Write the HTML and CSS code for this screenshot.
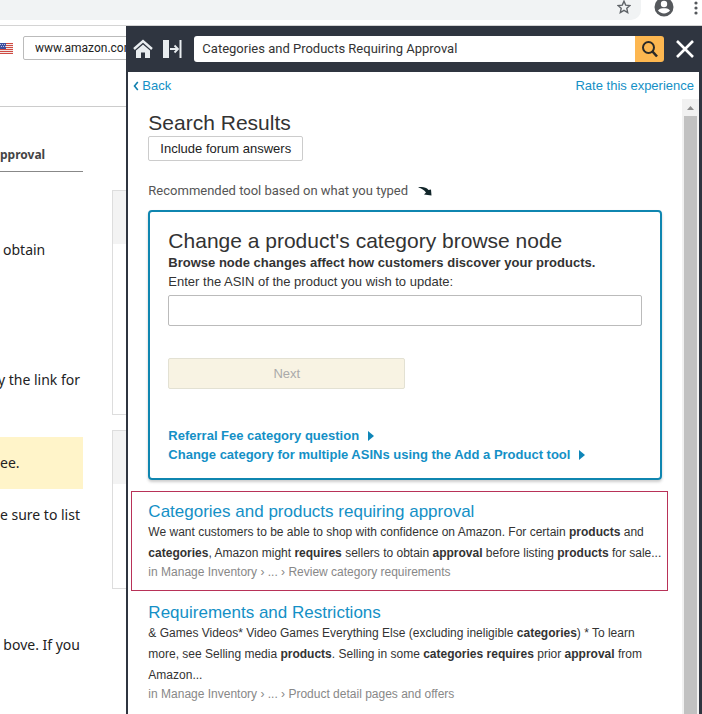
FILE: index.html
```html
<!DOCTYPE html>
<html lang="en">
<head>
<meta charset="utf-8">
<title>Search Results</title>
<link rel="stylesheet" href="styles.css">
</head>
<body>
<header class="browser-bar">
  <div class="address-bar">
    <button class="bar-button" aria-label="Bookmark this page">
      <svg width="14" height="14" viewBox="0 0 14 14"><path d="M7 1.2 8.7 5.1 13 5.5 9.8 8.3 10.7 12.6 7 10.4 3.3 12.6 4.2 8.3 1 5.5 5.3 5.1Z" fill="none" stroke="#5f6368" stroke-width="1.4"/></svg>
    </button>
  </div>
  <button class="bar-button" aria-label="Profile">
    <svg width="20" height="20" viewBox="0 0 20 20"><circle cx="10" cy="10" r="9.5" fill="#55585c"/><circle cx="10" cy="7" r="3.2" fill="#fff"/><path d="M4 13.6C5.500 11.400 8 11.200 10 11.200s4.500.2 6 2.400C14.600 15.500 12.400 16.400 10 16.400S5.400 15.500 4 13.600Z" fill="#fff"/></svg>
  </button>
  <button class="bar-button" aria-label="More">
    <svg width="4" height="16" viewBox="0 0 4 16" fill="#55585c"><circle cx="2" cy="3" r="1.600"/><circle cx="2" cy="8" r="1.600"/><circle cx="2" cy="13" r="1.600"/></svg>
  </button>
</header>
<div class="workspace">
  <main class="page">
    <div class="page-header">
      <svg class="flag" width="13" height="11" viewBox="0 0 13 11"><path fill="#f4e9e6" d="M0 0h13v11H0z"/><path stroke="#cf4a43" d="M0 .5h13M0 2.500h13M0 4.500h13M0 6.500h13M0 8.500h13M0 10.500h13"/><path fill="#3d4f9f" d="M0 0h6v6H0z"/><path stroke="#b9c0e0" stroke-dasharray="1 1" d="M0 1.500h6M1 3.500h5"/></svg>
      <select class="market" aria-label="Marketplace"><option>www.amazon.com</option></select>
    </div>
    <div class="page-body">
      <div class="article">
        <h2 class="article-tab">pproval</h2>
        <p class="line line-start">obtain</p>
        <p class="line">y the link for</p>
        <p class="note">ee.</p>
        <p class="line line-after-note">e sure to list</p>
        <p class="line">bove. If you</p>
      </div>
      <aside class="cards">
        <div class="card card-tall"></div>
        <div class="card"></div>
      </aside>
    </div>
  </main>
  <section class="panel" aria-label="Help">
    <form class="panel-header">
      <button class="tool" type="button" aria-label="Home">
        <svg width="20" height="20" viewBox="0 0 20 20"><path d="M1 10 10 2l9 8" fill="none" stroke="#e9edf0" stroke-width="2.400"/><path d="m10 5.500 7 6V19h-5v-5.500H8V19H3v-7.500Z" fill="#e9edf0"/></svg>
      </button>
      <button class="tool" type="button" aria-label="Undock panel">
        <svg width="19" height="18" viewBox="0 0 19 18"><path d="M0 0h6v18H0zM16.500 0H18.500v18H16.500z" fill="#e9edf0"/><path d="M7 9h8M11.500 5.500 15 9l-3.500 3.500" fill="none" stroke="#e9edf0" stroke-width="1.800"/></svg>
      </button>
      <div class="search">
        <input class="search-input" type="text" aria-label="Search help" value="Categories and Products Requiring Approval">
        <button class="search-button" type="button" aria-label="Search">
          <svg width="18" height="18" viewBox="0 0 18 18" fill="none" stroke="#2b2a28"><circle cx="7.500" cy="7.500" r="5.500" stroke-width="2"/><path d="m11.500 11.500 4.500 5" stroke-width="2.600"/></svg>
        </button>
      </div>
      <button class="tool close" type="button" aria-label="Close">
        <svg width="20" height="20" viewBox="0 0 20 20"><path d="m2 2 16 16M18 2 2 18" stroke="#fff" stroke-width="2.600"/></svg>
      </button>
    </form>
    <nav class="panel-nav">
      <a class="nav-link" href="#"><svg width="6" height="10" viewBox="0 0 6 10"><path d="M4.800 1 1.500 5l3.300 4" fill="none" stroke="#0f7fae" stroke-width="1.600"/></svg>Back</a>
      <a class="nav-link" href="#">Rate this experience</a>
    </nav>
    <div class="panel-body">
      <div class="content">
        <h1 class="title">Search Results</h1>
        <button class="forum" type="button">Include forum answers</button>
        <p class="recommended">Recommended tool based on what you typed
          <svg width="14" height="10" viewBox="0 0 14 10"><path d="M0 1.500C4 .5 8 1 10.500 4L13 3.500 13.500 9.500 6 8.500 8 6.500C6 4 4 2.500 0 1.500Z" fill="#12262a"/></svg>
        </p>
        <form class="asin">
          <h2 class="asin-title">Change a product's category browse node</h2>
          <p class="asin-text"><b>Browse node changes affect how customers discover your products.</b></p>
          <label class="asin-text" for="asin">Enter the ASIN of the product you wish to update:</label>
          <input class="asin-input" id="asin" type="text">
          <button class="next" type="button" disabled>Next</button>
          <a class="asin-link" href="#">Referral Fee category question<svg width="6" height="10" viewBox="0 0 6 10"><path d="m0 0 6 5-6 5Z" fill="#0f86b8"/></svg></a>
          <a class="asin-link" href="#">Change category for multiple ASINs using the Add a Product tool<svg width="6" height="10" viewBox="0 0 6 10"><path d="m0 0 6 5-6 5Z" fill="#0f86b8"/></svg></a>
        </form>
        <div class="results">
          <article class="result highlighted">
            <h3 class="result-title"><a href="#">Categories and products requiring approval</a></h3>
            <p class="result-text">We want customers to be able to shop with confidence on Amazon. For certain <b>products</b> and <b>categories</b>, Amazon might <b>requires</b> sellers to obtain <b>approval</b> before listing <b>products</b> for sale...</p>
            <p class="crumbs">in Manage Inventory › ... › Review category requirements</p>
          </article>
          <article class="result">
            <h3 class="result-title"><a href="#">Requirements and Restrictions</a></h3>
            <p class="result-text">&amp; Games Videos* Video Games Everything Else (excluding ineligible <b>categories</b>) * To learn more, see Selling media <b>products</b>. Selling in some <b>categories requires</b> prior <b>approval</b> from Amazon...</p>
            <p class="crumbs">in Manage Inventory › ... › Product detail pages and offers</p>
          </article>
        </div>
      </div>
      <div class="scrollbar" aria-hidden="true">
        <svg class="scroll-arrow" width="7" height="4" viewBox="0 0 7 4"><path d="M0 4 3.500 0 7 4Z" fill="#8c8c8c"/></svg>
        <div class="thumb"></div>
      </div>
    </div>
  </section>
</div>
</body>
</html>
```

FILE: styles.css
```css
* { box-sizing: border-box; }

body {
  margin: 0;
  min-height: 100vh;
  display: flex;
  flex-direction: column;
  background: #fff;
  color: #333;
  font: 13px/19px "Liberation Sans", Arial, sans-serif;
}

h1, h2, h3, p { margin: 0; font-weight: normal; }
a { color: #1490c6; text-decoration: none; }
button { padding: 0; border: 0; background: none; font: inherit; }
input, select { font: inherit; color: inherit; }
svg { display: block; flex: none; }

/* Browser chrome */
.browser-bar {
  display: flex;
  align-items: flex-start;
  gap: 20px;
  height: 26px;
  padding-right: 4px;
  border-bottom: 1px solid #d4d4d4;
}
.address-bar {
  flex: 1;
  display: flex;
  justify-content: flex-end;
  height: 20px;
  padding-right: 10px;
  margin-right: -7px;
  border-radius: 0 0 10px 0;
  background: #f1f3f4;
}
.address-bar .bar-button { height: 14px; }
.browser-bar > .bar-button { margin-top: -3px; }
.browser-bar > .bar-button:last-child { margin-top: 0; }

.workspace {
  flex: 1;
  display: grid;
  grid-template-columns: 18% 1fr;
}

/* Underlying page */
.page {
  overflow: hidden;
  color: #222;
  font: 14px/20px "Noto Sans", "Open Sans", sans-serif;
}
.page-header {
  display: flex;
  gap: 10px;
  height: 81px;
  padding-top: 10px;
  border-bottom: 1px solid #ccc;
}
.flag { margin-top: 7px; }
.market {
  appearance: none;
  flex: none;
  width: 130px;
  height: 24px;
  padding: 0 11px;
  border: 1px solid #bbb;
  border-radius: 2px;
  background: #fff;
  font: 12px/20px Roboto, sans-serif;
}
.page-body { display: flex; justify-content: space-between; }
.article { width: 83px; padding-top: 38px; }
.article-tab {
  padding-bottom: 6px;
  border-bottom: 1px solid #888;
  font-size: 12px;
  font-weight: bold;
  color: #444;
}
.line {
  display: flex;
  justify-content: flex-end;
  margin-top: 110px;
  padding-right: 3px;
  white-space: nowrap;
}
.line-start {
  justify-content: flex-start;
  margin-top: 68px;
  padding-left: 3px;
}
.note {
  margin-top: 47px;
  padding: 16px 0;
  background: #fff4c9;
}
.line-after-note { margin-top: 16px; }
.cards {
  display: grid;
  gap: 15px;
  align-content: start;
  width: 14px;
  padding-top: 83px;
}
.card {
  height: 159px;
  border: 1px solid #ddd;
  border-right: 0;
  background: linear-gradient(#f3f3f3 53px, #fff 53px);
}
.card-tall { height: 225px; }

/* Help panel */
.panel {
  display: flex;
  flex-direction: column;
  border: solid #2f3540;
  border-width: 0 3px 0 2px;
}
.panel-header {
  display: flex;
  align-items: center;
  height: 46px;
  padding: 0 4px 0 5px;
  gap: 10px;
  background: #2f3540;
}
.search {
  flex: 1;
  display: flex;
  height: 26px;
  margin: 0 1px 0 2px;
  border-radius: 3px;
  overflow: hidden;
}
.search-input {
  flex: 1;
  min-width: 0;
  padding: 0 8px;
  border: 0;
  font: 13px/20px Roboto, sans-serif;
}
.search-button {
  display: grid;
  place-items: center;
  width: 29px;
  background: #fdb750;
}
.panel-nav {
  display: flex;
  justify-content: space-between;
  height: 27px;
  padding: 4px 5px;
}
.nav-link { display: flex; align-items: center; gap: 3px; }
.panel-body { flex: 1; display: flex; }
.content { flex: 1; min-width: 0; padding: 10px 20px 0; }
.title { font-size: 21px; line-height: 27px; }
.forum {
  display: block;
  height: 25px;
  padding: 0 11px;
  border: 1px solid #ccc;
  border-radius: 2px;
  color: #222;
}
.recommended {
  display: flex;
  align-items: center;
  gap: 10px;
  margin: 20px 0 10px;
  font-family: Roboto, sans-serif;
  color: #555;
}
.asin {
  display: flex;
  flex-direction: column;
  padding: 16px 18px 14px;
  border: 2px solid #0f86b0;
  border-radius: 4px;
  box-shadow: 0 2px 3px #ccc;
}
.asin-title { font-size: 21px; line-height: 25px; }
.asin-input {
  height: 31px;
  margin: 4px 0 32px;
  border: 1px solid #bbb;
  border-radius: 2px;
}
.next {
  width: 50%;
  height: 31px;
  margin-bottom: 37px;
  border: 1px solid #e3e1d3;
  border-radius: 2px;
  background: #f8f3e3;
  color: #aaa;
}
.asin-link { display: flex; align-items: center; gap: 9px; font-weight: bold; }
.results { display: grid; gap: 1px; margin: 11px -6px 0 -17px; }
.result { padding: 9px 0 9px 16px; border: 1px solid transparent; }
.highlighted { border-color: #b83258; }
.result-title { font-size: 17px; line-height: 21px; }
.result-text { font-size: 12px; line-height: 21px; }
.crumbs { font-size: 12px; line-height: 17px; color: #888; }

.scrollbar {
  display: flex;
  flex-direction: column;
  align-items: center;
  width: 17px;
  background: #f1f1f1;
}
.scroll-arrow { margin: 7px 0 6px; }
.thumb { flex: 1; width: 13px; background: #c1c1c1; }
```
